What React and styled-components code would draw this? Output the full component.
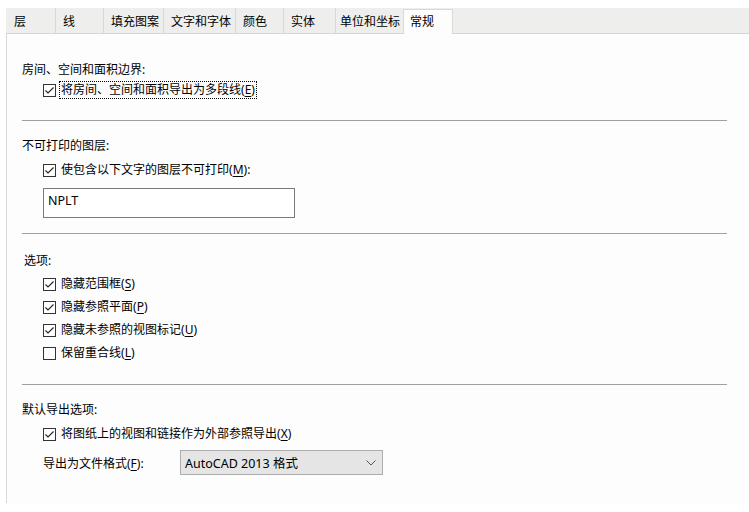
import React from 'react';
import styled, { createGlobalStyle } from 'styled-components';

const GlobalStyle = createGlobalStyle`
    body {
        margin: 0;
        background: #ffffff;
        font-family: "Noto Sans", "Noto Sans CJK SC", sans-serif;
        font-size: 12px;
        color: #000;
    }
`;

const Window = styled.div`
    padding-top: 8px;
    padding-left: 6px;
    width: 743px;
`;

const TabStrip = styled.div`
    display: flex;
    height: 25px;
    background: #eeeeec;
    border-bottom: 1px solid #d6d6d4;
    align-items: stretch;
`;

const Tab = styled.div`
    width: ${(p) => p.w}px;
    box-sizing: border-box;
    padding-left: ${(p) => p.pad}px;
    display: flex;
    align-items: center;
    white-space: nowrap;
    border-left: 1px solid #d9d9d9;
    background: ${(p) => (p.active ? '#fdfdfd' : 'transparent')};
    ${(p) =>
        p.active &&
        `
        margin-top: 1px;
        margin-bottom: -1px;
        align-items: flex-start;
        padding-top: 2px;
        border: 1px solid #d9d9d9;
        border-bottom: none;
    `}
    &:first-child {
        border-left: none;
    }
`;

const Panel = styled.div`
    background: #fdfdfd;
    border-left: 1px solid #d9d9d9;
    height: 469px;
    box-sizing: border-box;
    padding: 28px 22px 0 15px;
    display: flex;
    flex-direction: column;
`;

const Heading = styled.div`
    height: 16px;
    line-height: 16px;
    margin-top: ${(p) => p.mt || 0}px;
    padding-left: ${(p) => p.pl || 0}px;
`;

const Row = styled.div`
    display: flex;
    align-items: center;
    height: 16px;
    margin-top: ${(p) => p.mt || 0}px;
    padding-left: 21px;
    gap: 3px;
`;

const Label = styled.span`
    line-height: 16px;
    padding: 0 1px;
    border: 1px dotted ${(p) => (p.focus ? '#000' : 'transparent')};
`;

const Key = styled.span`
    text-decoration: underline;
    text-underline-offset: 2px;
`;

const Separator = styled.div`
    height: 1px;
    background: #a0a0a0;
    margin-top: ${(p) => p.mt}px;
`;

const TextBox = styled.div`
    margin: 10px 0 0 21px;
    width: 252px;
    height: 30px;
    box-sizing: border-box;
    border: 1px solid #7a7a7a;
    background: #fff;
    padding: 3px 0 0 4px;
    font-size: 12.5px;
`;

const FormatRow = styled.div`
    display: flex;
    align-items: center;
    margin-top: 8px;
    padding-left: 21px;
    height: 25px;
`;

const FormatLabel = styled.span`
    width: 137px;
`;

const Select = styled.div`
    width: 203px;
    height: 25px;
    box-sizing: border-box;
    border: 1px solid #adadad;
    background: #e5e5e5;
    display: flex;
    align-items: center;
    justify-content: space-between;
    padding: 0 6px 0 4px;
    font-size: 12.5px;
`;

const CheckBox = ({ checked }) => (
    <svg width="13" height="13" viewBox="0 0 13 13">
        <rect x="0.5" y="0.5" width="12" height="12" fill="#fff" stroke="#333" />
        {checked && <path d="M2.5 6.5 L5 9 L10.5 3.5" fill="none" stroke="#222" strokeWidth="1.1" />}
    </svg>
);

const Chevron = () => (
    <svg width="10" height="6" viewBox="0 0 10 6">
        <path d="M0.5 0.5 L5 5 L9.5 0.5" fill="none" stroke="#555" strokeWidth="1" />
    </svg>
);

// name, width, left padding, active
const tabs = [
    ['层', 49, 8],
    ['线', 48, 7],
    ['填充图案', 60, 7],
    ['文字和字体', 72, 7],
    ['颜色', 48, 7],
    ['实体', 52, 7],
    ['单位和坐标', 68, 4],
    ['常规', 50, 6, true],
];

const Option = ({ mt, checked = true, focus, text, k, tail = '' }) => (
    <Row mt={mt}>
        <CheckBox checked={checked} />
        <Label focus={focus}>
            {text}(<Key>{k}</Key>){tail}
        </Label>
    </Row>
);

const App = () => {
    return (
        <>
            <GlobalStyle />
            <Window>
                <TabStrip>
                    {tabs.map(([name, w, pad, active]) => (
                        <Tab key={name} w={w} pad={pad} active={active}>
                            {name}
                        </Tab>
                    ))}
                </TabStrip>
                <Panel>
                    <Heading>房间、空间和面积边界:</Heading>
                    <Option mt={4} focus text="将房间、空间和面积导出为多段线" k="E" />
                    <Separator mt={22} />

                    <Heading mt={17}>不可打印的图层:</Heading>
                    <Option mt={8} text="使包含以下文字的图层不可打印" k="M" tail=":" />
                    <TextBox>NPLT</TextBox>
                    <Separator mt={15} />

                    <Heading mt={19} pl={2}>选项:</Heading>
                    <Option mt={7} text="隐藏范围框" k="S" />
                    <Option mt={7} text="隐藏参照平面" k="P" />
                    <Option mt={7} text="隐藏未参照的视图标记" k="U" />
                    <Option mt={7} checked={false} text="保留重合线" k="L" />
                    <Separator mt={23} />

                    <Heading mt={17}>默认导出选项:</Heading>
                    <Option mt={8} text="将图纸上的视图和链接作为外部参照导出" k="X" />
                    <FormatRow>
                        <FormatLabel>
                            导出为文件格式(<Key>F</Key>):
                        </FormatLabel>
                        <Select>
                            <span>AutoCAD 2013 格式</span>
                            <Chevron />
                        </Select>
                    </FormatRow>
                </Panel>
            </Window>
        </>
    );
};

export default App;
